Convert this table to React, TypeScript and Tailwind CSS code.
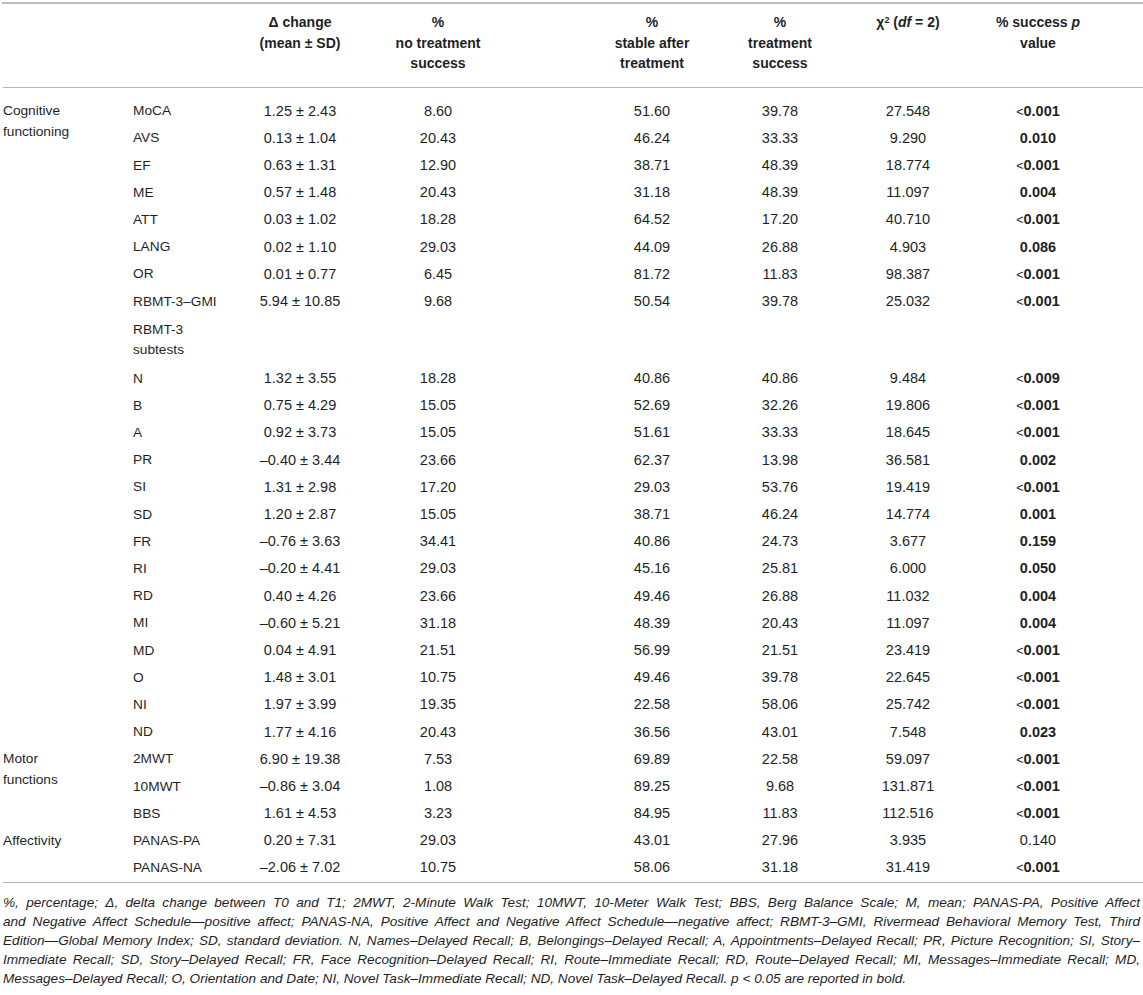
type Row = [string, string, string, string, string, string, string]

const groups: { label: string[]; rows: (Row | 'sub')[] }[] = [
  {
    label: ['Cognitive', 'functioning'],
    rows: [
      ['MoCA', '1.25 ± 2.43', '8.60', '51.60', '39.78', '27.548', '<0.001'],
      ['AVS', '0.13 ± 1.04', '20.43', '46.24', '33.33', '9.290', '0.010'],
      ['EF', '0.63 ± 1.31', '12.90', '38.71', '48.39', '18.774', '<0.001'],
      ['ME', '0.57 ± 1.48', '20.43', '31.18', '48.39', '11.097', '0.004'],
      ['ATT', '0.03 ± 1.02', '18.28', '64.52', '17.20', '40.710', '<0.001'],
      ['LANG', '0.02 ± 1.10', '29.03', '44.09', '26.88', '4.903', '0.086'],
      ['OR', '0.01 ± 0.77', '6.45', '81.72', '11.83', '98.387', '<0.001'],
      ['RBMT-3–GMI', '5.94 ± 10.85', '9.68', '50.54', '39.78', '25.032', '<0.001'],
      'sub',
      ['N', '1.32 ± 3.55', '18.28', '40.86', '40.86', '9.484', '<0.009'],
      ['B', '0.75 ± 4.29', '15.05', '52.69', '32.26', '19.806', '<0.001'],
      ['A', '0.92 ± 3.73', '15.05', '51.61', '33.33', '18.645', '<0.001'],
      ['PR', '–0.40 ± 3.44', '23.66', '62.37', '13.98', '36.581', '0.002'],
      ['SI', '1.31 ± 2.98', '17.20', '29.03', '53.76', '19.419', '<0.001'],
      ['SD', '1.20 ± 2.87', '15.05', '38.71', '46.24', '14.774', '0.001'],
      ['FR', '–0.76 ± 3.63', '34.41', '40.86', '24.73', '3.677', '0.159'],
      ['RI', '–0.20 ± 4.41', '29.03', '45.16', '25.81', '6.000', '0.050'],
      ['RD', '0.40 ± 4.26', '23.66', '49.46', '26.88', '11.032', '0.004'],
      ['MI', '–0.60 ± 5.21', '31.18', '48.39', '20.43', '11.097', '0.004'],
      ['MD', '0.04 ± 4.91', '21.51', '56.99', '21.51', '23.419', '<0.001'],
      ['O', '1.48 ± 3.01', '10.75', '49.46', '39.78', '22.645', '<0.001'],
      ['NI', '1.97 ± 3.99', '19.35', '22.58', '58.06', '25.742', '<0.001'],
      ['ND', '1.77 ± 4.16', '20.43', '36.56', '43.01', '7.548', '0.023'],
    ],
  },
  {
    label: ['Motor', 'functions'],
    rows: [
      ['2MWT', '6.90 ± 19.38', '7.53', '69.89', '22.58', '59.097', '<0.001'],
      ['10MWT', '–0.86 ± 3.04', '1.08', '89.25', '9.68', '131.871', '<0.001'],
      ['BBS', '1.61 ± 4.53', '3.23', '84.95', '11.83', '112.516', '<0.001'],
    ],
  },
  {
    label: ['Affectivity'],
    rows: [
      ['PANAS-PA', '0.20 ± 7.31', '29.03', '43.01', '27.96', '3.935', '0.140'],
      ['PANAS-NA', '–2.06 ± 7.02', '10.75', '58.06', '31.18', '31.419', '<0.001'],
    ],
  },
]

const rowGrid = 'grid grid-cols-[107px_120px_232px_120px_136px_120px_140px] items-center'

function PValue({ v }: { v: string }) {
  if (v === '0.140') return <span>{v}</span>
  if (v.startsWith('<'))
    return (
      <span className="font-bold">
        <span className="font-normal text-[12.5px]">&lt;</span>
        {v.slice(1)}
      </span>
    )
  return <span className="font-bold">{v}</span>
}

function DataRow({ row }: { row: Row }) {
  return (
    <div className={`${rowGrid} h-[27.2px]`}>
      <div>{row[0]}</div>
      <div className="text-center text-[14.5px]">{row[1]}</div>
      <div className="text-center text-[14.5px] pr-[76px]">{row[2]}</div>
      <div className="text-center text-[14.5px]">{row[3]}</div>
      <div className="text-center text-[14.5px]">{row[4]}</div>
      <div className="text-center text-[14.5px]">{row[5]}</div>
      <div className="text-center text-[14.5px]">
        <PValue v={row[6]} />
      </div>
    </div>
  )
}

const justified = 'text-justify [text-align-last:justify]'

export default function App() {
  return (
    <div className="bg-white w-[1143px] h-[995px] overflow-hidden font-['Liberation_Sans',Arial,sans-serif] text-[13.7px] text-[#1f1f1f]">
      <div className="ml-[2px] pl-[1px] border-t-2 border-[#bdbdbd] mt-[2px]">
        {/* Header */}
        <div className="flex pt-[8px] pb-[13px] border-b border-[#b5b5b5] font-bold text-[14px] leading-[20.5px]">
          <div className="w-[130px]" />
          <div className={`${rowGrid} items-start`}>
            <div />
            <div className="text-center">
              Δ change
              <br />
              (mean ± SD)
            </div>
            <div className="text-center pr-[76px]">
              %<br />
              no treatment
              <br />
              success
            </div>
            <div className="text-center">
              %<br />
              stable after
              <br />
              treatment
            </div>
            <div className="text-center">
              %<br />
              treatment
              <br />
              success
            </div>
            <div className="text-center">
              χ<sup className="text-[9px]">2</sup> (<i>df</i> = 2)
            </div>
            <div className="text-center">
              % success <i>p</i>
              <br />
              value
            </div>
          </div>
        </div>

        {/* Body */}
        <div className="pt-[10.4px] border-b border-[#b5b5b5]">
          {groups.map((g) => (
            <div key={g.label.join(' ')} className="flex">
              <div className="w-[130px] pt-[3.4px] leading-[20.5px]">
                {g.label.map((l) => (
                  <div key={l}>{l}</div>
                ))}
              </div>
              <div>
                {g.rows.map((r, i) =>
                  r === 'sub' ? (
                    <div key={i} className="h-[50px] flex flex-col justify-center leading-[20.5px]">
                      <div>RBMT-3</div>
                      <div>subtests</div>
                    </div>
                  ) : (
                    <DataRow key={i} row={r} />
                  )
                )}
              </div>
            </div>
          ))}
        </div>

        {/* Footnote */}
        <div className="pt-[10px] pr-[3px] italic text-[13.6px] leading-[19px] whitespace-nowrap">
          <div className={justified}>
            %, percentage; Δ, delta change between T0 and T1; 2MWT, 2-Minute Walk Test; 10MWT, 10-Meter Walk Test; BBS, Berg Balance Scale; M, mean; PANAS-PA, Positive Affect
          </div>
          <div className={justified}>
            and Negative Affect Schedule—positive affect; PANAS-NA, Positive Affect and Negative Affect Schedule—negative affect; RBMT-3–GMI, Rivermead Behavioral Memory Test, Third
          </div>
          <div className={justified}>
            Edition—Global Memory Index; SD, standard deviation. N, Names–Delayed Recall; B, Belongings–Delayed Recall; A, Appointments–Delayed Recall; PR, Picture Recognition; SI, Story–
          </div>
          <div className={justified}>
            Immediate Recall; SD, Story–Delayed Recall; FR, Face Recognition–Delayed Recall; RI, Route–Immediate Recall; RD, Route–Delayed Recall; MI, Messages–Immediate Recall; MD,
          </div>
          <div>
            Messages–Delayed Recall; O, Orientation and Date; NI, Novel Task–Immediate Recall; ND, Novel Task–Delayed Recall. <i>p</i> &lt; 0.05 are reported in bold.
          </div>
        </div>
      </div>
    </div>
  )
}
